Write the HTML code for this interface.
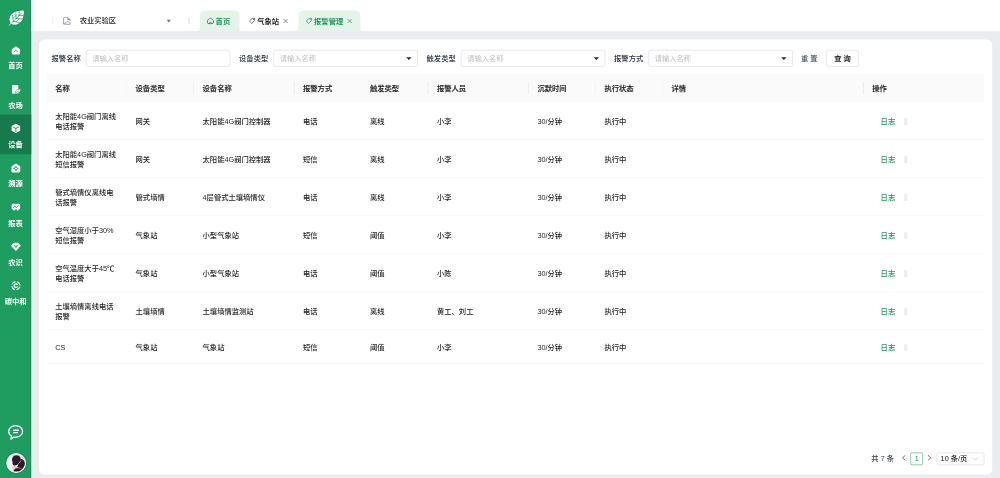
<!DOCTYPE html>
<html lang="zh-CN">
<head>
<meta charset="utf-8">
<title>报警管理</title>
<style>
html,body{margin:0;padding:0;width:1000px;height:478px;overflow:hidden;background:#ebecef;}
*{box-sizing:border-box;}
#app{position:absolute;left:0;top:0;width:1920px;height:918px;transform:scale(0.5208333);transform-origin:0 0;filter:contrast(1);
  font-family:"Liberation Sans","Noto Sans CJK SC",sans-serif;font-size:14px;line-height:20px;color:#262626;background:#ebecef;overflow:hidden;}
/* sidebar */
#side{position:absolute;left:0;top:0;width:60.200px;height:918px;background:#1f9c60;box-shadow:inset -1.500px 0 0 #178a52;}
#logo{position:absolute;left:15.500px;top:18px;width:32px;height:32px;}
.mi{position:absolute;left:0;width:60px;height:75.4px;text-align:center;color:#fff;font-weight:700;font-size:14px;}
.mi.on{background:#167a4c;}
.mi svg{position:absolute;left:20.5px;top:17px;width:19px;height:19px;}
.mi span{position:absolute;left:0;top:46.5px;width:60px;line-height:20px;}
#chat{position:absolute;left:14px;top:814px;width:32px;height:34px;}
#ava{position:absolute;left:11.500px;top:869.500px;width:38px;height:38px;border-radius:50%;border:2px solid #fff;background:#f4f1ee;overflow:hidden;box-shadow:0 0 0 1.500px #178a52;}
/* header */
#hd{position:absolute;left:60px;top:0;width:1860px;height:60px;background:#fff;box-shadow:0 1px 4px rgba(0,21,41,.06);}
.vd{position:absolute;top:33px;width:1.500px;height:14px;background:#dfe2ea;}
#hd .org{position:absolute;left:93px;top:30px;font-size:14px;line-height:20px;color:#1f1f1f;font-weight:500;}
.tab{position:absolute;top:20px;height:40px;border-radius:10px 10px 0 0;font-size:14px;line-height:20px;font-weight:700;color:#1f1f1f;white-space:nowrap;}
.tab.g{background:#e5f4eb;color:#1e9a5c;}
.tab .tx{position:absolute;top:11px;}
.tab.g:before,.tab.g:after{content:"";position:absolute;bottom:0;width:5px;height:5px;}
.tab.g:before{left:-5px;background:radial-gradient(circle at 0 0,transparent 4.500px,#e5f4eb 5px);}
.tab.g:after{right:-5px;background:radial-gradient(circle at 100% 0,transparent 4.500px,#e5f4eb 5px);}
.tab svg{position:absolute;}
/* card */
#card{position:absolute;left:75px;top:76px;width:1830px;height:835px;background:#fff;border-radius:10px;}
.lab{position:absolute;top:27px;line-height:20px;font-weight:500;color:#2a3040;}
.inp{position:absolute;top:20px;width:277px;height:32px;border:1px solid #d4d4d4;border-radius:4px;background:#fff;color:#bfbfbf;padding:6px 11px 4px;line-height:20px;}
.inp i{position:absolute;right:11px;top:13px;width:0;height:0;border-left:5px solid transparent;border-right:5px solid transparent;border-top:5.500px solid #262626;}
#reset{position:absolute;left:1463px;top:27px;color:#3b4252;font-weight:400;}
#query{position:absolute;left:1511px;top:20px;width:63px;height:32px;border:1px solid #d9d9d9;border-radius:4px;text-align:center;line-height:32px;font-weight:700;color:#262626;}
table{position:absolute;left:15px;top:66px;width:1800px;border-collapse:collapse;table-layout:fixed;}
th{height:53px;background:#fafafa;text-align:left;font-weight:500;-webkit-text-stroke:0.300px #262626;color:#262626;padding:17px 16px 15px;position:relative;border-bottom:1px solid #f0f0f0;}
th:not(:last-child):after{content:"";position:absolute;right:0;top:16px;width:1.500px;height:22px;background:#ececec;}
td{font-weight:500;padding:17px 16px 15px;border-bottom:1px solid #f0f0f0;color:#262626;vertical-align:middle;white-space:nowrap;height:65px;}
td.op{color:#1e9a5c;font-weight:500;padding-left:32px;}
td.op b{display:inline-block;width:6px;height:13px;background:#ececf1;margin-left:17px;vertical-align:-2px;}
/* pagination */
#pg{position:absolute;left:0;top:793px;width:1830px;height:24px;line-height:24px;color:#262626;}
#pg .t{position:absolute;left:1598px;top:0;font-weight:500;color:#3d4454;}
#pg .b1{position:absolute;left:1673px;top:0;width:24px;height:24px;border:1.500px solid #1e9a5c;border-radius:3px;color:#1e9a5c;text-align:center;line-height:21px;font-weight:400;}
#pg svg{position:absolute;top:4.300px;width:12px;height:12px;}
#pg .sz{position:absolute;left:1723px;top:0;width:92px;height:24px;border:1px solid #d4d4d4;border-radius:4px;padding-left:7px;line-height:22px;font-weight:500;}
</style>
</head>
<body>
<div id="app">

<div id="side">
  <svg id="logo" viewBox="0 0 32 32">
    <path d="M4.500 27.500 C-3 13 9 1 29.500 2 C31.500 23 18 34 4.500 27.500 Z" fill="#fff" stroke="#178c53" stroke-width="2" stroke-linejoin="round" paint-order="stroke"/>
    <path d="M2 30.500 L25 7.500 M9.500 23 L8 11 M9.500 23 L21.500 25 M15 17.500 L14.500 6.500 M15 17.500 L26.500 18.500 M20.500 12 L21 4 M20.500 12 L29 11.500 M8.800 17 L14.800 12 M15 23.800 L20.800 18" stroke="#1f9c60" stroke-width="1.400" fill="none" stroke-linecap="round"/>
    <path d="M1.500 30.500 L5 27" stroke="#fff" stroke-width="1.600" stroke-linecap="round"/>
  </svg>

  <div class="mi" style="top:69.6px">
    <svg viewBox="0 0 18 18"><path d="M9 1.5 L16.5 7 V15 a1.5 1.5 0 0 1 -1.5 1.5 H3 A1.5 1.5 0 0 1 1.5 15 V7 Z" fill="#fff"/><path d="M6 11.5 L9 9 L12 11.5" stroke="#1f9c60" stroke-width="1.6" fill="none" stroke-linecap="round" stroke-linejoin="round"/></svg>
    <span>首页</span></div>
  <div class="mi" style="top:145px">
    <svg viewBox="0 0 18 18"><path d="M3.500 1 H12 a1.500 1.500 0 0 1 1.500 1.500 V17 H3.500 A1.500 1.500 0 0 1 2 15.500 V2.500 A1.500 1.500 0 0 1 3.500 1 Z" fill="#fff"/><path d="M8 16.300 C7.200 11.500 11 8.300 17.800 8.600 C17.800 14 13.500 17.200 8 16.300 Z" fill="#fff" stroke="#1f9c60" stroke-width="1"/><path d="M9.500 15 L14.500 11.200" stroke="#1f9c60" stroke-width="0.900" stroke-linecap="round"/><path d="M4.500 5.500 L6.500 7.500" stroke="#1f9c60" stroke-width="1" stroke-linecap="round" opacity="0.450"/></svg>
    <span>农场</span></div>
  <div class="mi on" style="top:220.4px">
    <svg viewBox="0 0 18 18"><path d="M9 2.200 L15.300 5.600 V12.400 L9 15.800 L2.700 12.400 V5.600 Z" fill="#fff" stroke="#fff" stroke-width="3" stroke-linejoin="round"/><path d="M3.800 6.300 L9 9.200 L14.200 6.300 M9 9.200 V15" stroke="#167a4c" stroke-width="1.500" fill="none" stroke-linecap="round"/></svg>
    <span>设备</span></div>
  <div class="mi" style="top:295.8px">
    <svg viewBox="0 0 18 18"><path d="M9 1.300 L16.600 6.200 V14.600 a2 2 0 0 1 -2 2 H3.400 a2 2 0 0 1 -2 -2 V6.200 Z" fill="#fff" stroke="#fff" stroke-width="0.800" stroke-linejoin="round"/><circle cx="9" cy="10" r="2.700" fill="none" stroke="#1f9c60" stroke-width="1.700"/><path d="M9 5.800 V7 M9 13 V14.200 M4.800 10 H6 M12 10 H13.200" stroke="#1f9c60" stroke-width="1.300" stroke-linecap="round"/></svg>
    <span>溯源</span></div>
  <div class="mi" style="top:371.2px">
    <svg viewBox="0 0 18 18"><path d="M3.500 3 H7.800 L9 4.300 L10.200 3 H14.500 A2.200 2.200 0 0 1 16.700 5.200 V11.300 A2.200 2.200 0 0 1 14.500 13.500 H14 L12.500 16.500 L11 13.500 H7 L5.500 16.500 L4 13.500 H3.500 A2.200 2.200 0 0 1 1.300 11.300 V5.200 A2.200 2.200 0 0 1 3.500 3 Z" fill="#fff"/><path d="M4.600 9.800 L7 7.600 L10 9.600 L13.400 6.600" stroke="#1f9c60" stroke-width="1.600" fill="none" stroke-linecap="round" stroke-linejoin="round"/></svg>
    <span>报表</span></div>
  <div class="mi" style="top:446.6px">
    <svg viewBox="0 0 18 18"><path d="M5 2.800 H13 L17.300 7.600 L9 16.300 L0.700 7.600 Z" fill="#fff" stroke="#fff" stroke-width="1.200" stroke-linejoin="round"/><path d="M6.600 6.800 L9 10.600 L11.400 6.800" stroke="#1f9c60" stroke-width="1.700" fill="none" stroke-linecap="round" stroke-linejoin="round"/></svg>
    <span>农识</span></div>
  <div class="mi" style="top:522px">
    <svg viewBox="0 0 18 18"><circle cx="9" cy="9" r="7.400" fill="none" stroke="#fff" stroke-width="2.200" stroke-dasharray="8 3.624" stroke-dashoffset="-1.812" stroke-linecap="butt"/><path d="M11.600 6.900 A3.300 3.300 0 1 0 11.600 11.100" stroke="#fff" stroke-width="2.200" fill="none" stroke-linecap="round"/></svg>
    <span>碳中和</span></div>

  <svg id="chat" viewBox="0 0 30 32">
    <path d="M15 3 C22 3 27.500 7.500 27.500 13.500 C27.500 19.500 22 24 15 24 C13.800 24 12.700 23.900 11.600 23.600 L6.500 27.500 L7.500 21.800 C4.400 19.900 2.500 16.900 2.500 13.500 C2.500 7.500 8 3 15 3 Z" fill="none" stroke="#fff" stroke-width="2.300" stroke-linejoin="round"/>
    <path d="M11.500 11.300 H20 M11.500 15.700 H18" stroke="#fff" stroke-width="2.600" stroke-linecap="round"/>
  </svg>
  <div id="ava">
    <svg viewBox="0 0 34 34" width="34" height="34">
      <rect width="34" height="34" fill="#e6e1e6"/>
      <ellipse cx="5" cy="17" rx="9" ry="16" fill="#f6f4f6"/>
      <ellipse cx="17.500" cy="10.500" rx="8.500" ry="8.200" fill="#2a1a2b"/>
      <ellipse cx="26" cy="19" rx="8" ry="10" fill="#2a1a2b"/>
      <ellipse cx="15" cy="17" rx="5" ry="5" fill="#2a1a2b"/>
      <path d="M9.500 25.500 C16 24 22 20 26 12.500" fill="none" stroke="#e9a274" stroke-width="1.600" stroke-linecap="round"/>
      <path d="M15 22.500 L20 20.500 L21 23 Z" fill="#f4efef"/>
      <ellipse cx="20.500" cy="33" rx="8.500" ry="6.500" fill="#2a1a2b"/>
      <path d="M12.500 30 C16 24.500 25 24.500 29 30" fill="none" stroke="#e08a4c" stroke-width="1.600" stroke-linecap="round"/>
    </svg>
  </div>
</div>

<div id="hd">
  <div class="vd" style="left:40.500px"></div>
  <svg style="position:absolute;left:61px;top:33px;width:15.500px;height:14.500px" viewBox="2.500 0.700 13.800 16.200" preserveAspectRatio="none">
    <path d="M3.500 1.500 H10.500 L14.500 5.500 V9" fill="none" stroke="#8589a0" stroke-width="1.500" stroke-linejoin="round"/>
    <path d="M10.500 1.500 V5.500 H14.500" fill="none" stroke="#8589a0" stroke-width="1.500" stroke-linejoin="round"/>
    <path d="M3.500 1.500 V15.500 H6" fill="none" stroke="#8589a0" stroke-width="1.500" stroke-linejoin="round"/>
    <path d="M7.500 16 C5 16 5 12.500 7.800 12.500 C8.200 9.500 13 9.500 13.500 12.500 C16.500 12.500 16.500 16 14 16 Z" fill="none" stroke="#8589a0" stroke-width="1.500" stroke-linejoin="round"/>
  </svg>
  <div class="org">农业实验区</div>
  <i style="position:absolute;left:260px;top:38px;width:0;height:0;border-left:4.500px solid transparent;border-right:4.500px solid transparent;border-top:5.500px solid #70758f"></i>
  <div class="vd" style="left:302px"></div>

  <div class="tab g" style="left:324px;width:76px">
    <svg style="left:13px;top:13px;width:14px;height:14px" viewBox="0 0 14 14"><path d="M7 1.300 C9 2.800 12.800 5 12.800 7.500 V9.500 A3 3 0 0 1 9.800 12.500 H4.200 A3 3 0 0 1 1.200 9.500 V7.500 C1.200 5 5 2.800 7 1.300 Z" fill="none" stroke="#50535f" stroke-width="1.500" stroke-linejoin="round"/><path d="M5 11.800 C5 8.500 9 8.500 9 11.800" stroke="#50535f" stroke-width="1.300" fill="none"/></svg>
    <span class="tx" style="left:30px">首页</span>
  </div>
  <div class="tab" style="left:402px;width:108px">
    <svg style="left:15px;top:13px;width:14px;height:14px" viewBox="0 0 14 14"><path d="M7.500 2 H12 V6.500 L6.500 12 L2 7.500 Z" fill="none" stroke="#4a4a55" stroke-width="1.500" stroke-linejoin="round"/><circle cx="9.700" cy="4.300" r="1" fill="#4a4a55"/></svg>
    <span class="tx" style="left:32px">气象站</span>
    <svg style="left:81px;top:15px;width:10.500px;height:10.500px" viewBox="0 0 12 12"><path d="M2.200 2.200 L9.800 9.800 M9.800 2.200 L2.200 9.800" stroke="#5f6378" stroke-width="1.600" stroke-linecap="round"/></svg>
  </div>
  <div class="tab g" style="left:513px;width:119px">
    <svg style="left:13px;top:13px;width:14px;height:14px" viewBox="0 0 14 14"><path d="M7.500 2 H12 V6.500 L6.500 12 L2 7.500 Z" fill="none" stroke="#1e9a5c" stroke-width="1.500" stroke-linejoin="round"/><circle cx="9.700" cy="4.300" r="1" fill="#1e9a5c"/></svg>
    <span class="tx" style="left:30px">报警管理</span>
    <svg style="left:93px;top:15px;width:10.500px;height:10.500px" viewBox="0 0 12 12"><path d="M2.200 2.200 L9.800 9.800 M9.800 2.200 L2.200 9.800" stroke="#1e9a5c" stroke-width="1.600" stroke-linecap="round"/></svg>
  </div>
</div>

<div id="card">
  <div class="lab" style="left:24px">报警名称</div>
  <div class="inp" style="left:90px">请输入名称</div>
  <div class="lab" style="left:384px">设备类型</div>
  <div class="inp" style="left:450px">请输入名称<i></i></div>
  <div class="lab" style="left:744px">触发类型</div>
  <div class="inp" style="left:810px">请输入名称<i></i></div>
  <div class="lab" style="left:1104px">报警方式</div>
  <div class="inp" style="left:1170px">请输入名称<i></i></div>
  <div id="reset">重 置</div>
  <div id="query">查 询</div>

  <table>
    <colgroup>
      <col style="width:154.3px"><col style="width:128.6px"><col style="width:192.9px"><col style="width:128.6px"><col style="width:128.6px">
      <col style="width:192.9px"><col style="width:128.6px"><col style="width:128.6px"><col style="width:385.7px"><col style="width:231.2px">
    </colgroup>
    <thead><tr>
      <th>名称</th><th>设备类型</th><th>设备名称</th><th>报警方式</th><th>触发类型</th><th>报警人员</th><th>沉默时间</th><th>执行状态</th><th>详情</th><th>操作</th>
    </tr></thead>
    <tbody>
      <tr><td>太阳能4G阀门离线<br>电话报警</td><td>网关</td><td>太阳能4G阀门控制器</td><td>电话</td><td>离线</td><td>小李</td><td>30/分钟</td><td>执行中</td><td></td><td class="op">日志<b></b></td></tr>
      <tr><td>太阳能4G阀门离线<br>短信报警</td><td>网关</td><td>太阳能4G阀门控制器</td><td>短信</td><td>离线</td><td>小李</td><td>30/分钟</td><td>执行中</td><td></td><td class="op">日志<b></b></td></tr>
      <tr><td>管式墒情仪离线电<br>话报警</td><td>管式墒情</td><td>4层管式土壤墒情仪</td><td>电话</td><td>离线</td><td>小李</td><td>30/分钟</td><td>执行中</td><td></td><td class="op">日志<b></b></td></tr>
      <tr><td>空气湿度小于30%<br>短信报警</td><td>气象站</td><td>小型气象站</td><td>短信</td><td>阈值</td><td>小李</td><td>30/分钟</td><td>执行中</td><td></td><td class="op">日志<b></b></td></tr>
      <tr><td>空气温度大于45℃<br>电话报警</td><td>气象站</td><td>小型气象站</td><td>电话</td><td>阈值</td><td>小陈</td><td>30/分钟</td><td>执行中</td><td></td><td class="op">日志<b></b></td></tr>
      <tr><td>土壤墒情离线电话<br>报警</td><td>土壤墒情</td><td>土壤墒情监测站</td><td>电话</td><td>离线</td><td>黄工、刘工</td><td>30/分钟</td><td>执行中</td><td></td><td class="op">日志<b></b></td></tr>
      <tr><td>CS</td><td>气象站</td><td>气象站</td><td>短信</td><td>阈值</td><td>小李</td><td>30/分钟</td><td>执行中</td><td></td><td class="op">日志<b></b></td></tr>
    </tbody>
  </table>

  <div id="pg">
    <span class="t">共 7 条</span>
    <svg style="left:1655px" viewBox="0 0 14 14"><path d="M9.500 1.500 L3.500 7 L9.500 12.500" fill="none" stroke="#434a5a" stroke-width="1.800"/></svg>
    <div class="b1">1</div>
    <svg style="left:1703px" viewBox="0 0 14 14"><path d="M4.500 1.500 L10.500 7 L4.500 12.500" fill="none" stroke="#434a5a" stroke-width="1.800"/></svg>
    <div class="sz">10 条/页
      <svg style="left:68px;top:5px;width:12px;height:12px" viewBox="0 0 12 12"><path d="M1.500 3.500 L6 8.500 L10.500 3.500" fill="none" stroke="#bfbfbf" stroke-width="1.300"/></svg>
    </div>
  </div>
</div>

</div>
</body>
</html>
